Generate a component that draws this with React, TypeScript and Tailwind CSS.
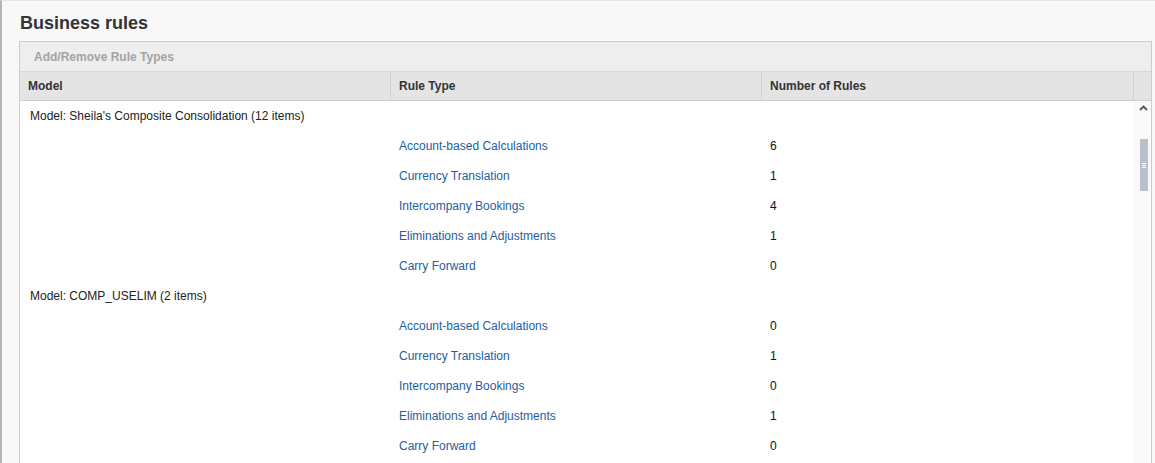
import React from "react";

interface Rule {
  name: string;
  count: number;
}

interface ModelGroup {
  label: string;
  items: number;
  rules: Rule[];
}

const ruleSet = (counts: number[]): Rule[] =>
  [
    "Account-based Calculations",
    "Currency Translation",
    "Intercompany Bookings",
    "Eliminations and Adjustments",
    "Carry Forward",
  ].map((name, i) => ({ name, count: counts[i] }));

const groups: ModelGroup[] = [
  { label: "Sheila's Composite Consolidation", items: 12, rules: ruleSet([6, 1, 4, 1, 0]) },
  { label: "COMP_USELIM", items: 2, rules: ruleSet([0, 1, 0, 1, 0]) },
];

const App: React.FC = () => {
  return (
    <div
      className="h-[463px] w-[1155px] overflow-hidden bg-[#f8f8f8] border-t border-t-[#dfe8f1] border-l-2 border-l-[#b4b4b4] text-[12px] text-[#333]"
      style={{ fontFamily: '"Liberation Sans", Arial, sans-serif' }}
    >
      <h1 className="pl-[18px] pt-[12px] pb-[7px] text-[18px] leading-[21px] font-bold text-[#333]">
        Business rules
      </h1>

      <div className="ml-[17px] w-[1133px] border border-[#cccccc] bg-white">
        {/* Toolbar */}
        <div className="h-[30px] flex items-center pl-[14px] bg-[#eeeeee] border-b border-[#d6d6d6]">
          <span className="font-bold text-[#a3a3a3]">Add/Remove Rule Types</span>
        </div>

        {/* Header */}
        <div className="flex h-[29px] bg-[#e4e4e4] border-b border-[#cfcfcf] font-bold text-[#333]">
          <div className="w-[371px] flex items-center pl-[8px] border-r border-[#d2d2d2]">Model</div>
          <div className="w-[371px] flex items-center pl-[8px] border-r border-[#d2d2d2]">Rule Type</div>
          <div className="w-[372px] flex items-center pl-[8px] border-r border-[#d2d2d2]">Number of Rules</div>
          <div className="flex-1" />
        </div>

        {/* Body */}
        <div className="flex h-[400px]">
          <div className="w-[1114px]">
            {groups.map((g) => (
              <div key={g.label}>
                <div className="h-[30px] flex items-center pl-[10px] text-[#222]">
                  Model: {g.label} ({g.items} items)
                </div>
                {g.rules.map((r) => (
                  <div key={r.name} className="h-[30px] flex items-center">
                    <div className="w-[371px]" />
                    <div className="w-[371px] pl-[8px]">
                      <a className="text-[#23609e] cursor-pointer">{r.name}</a>
                    </div>
                    <div className="pl-[8px] text-[#111]">{r.count}</div>
                  </div>
                ))}
              </div>
            ))}
          </div>

          {/* Scrollbar */}
          <div className="w-[17px] bg-[#f9f9f9] flex flex-col items-center pt-[4px]">
            <svg width="9" height="6" viewBox="0 0 9 6" className="ml-[2px]">
              <path d="M1 5 L4.5 1.5 L8 5" fill="none" stroke="#555" strokeWidth="1.8" />
            </svg>
            <div className="mt-[28px] ml-[2px] w-[8px] h-[52px] bg-[#b9c2cb] flex flex-col items-center justify-center gap-[1px]">
              <span className="block w-[4px] h-[1px] bg-white" />
              <span className="block w-[4px] h-[1px] bg-white" />
              <span className="block w-[4px] h-[1px] bg-white" />
            </div>
          </div>
        </div>
      </div>
    </div>
  );
};

export default App;
